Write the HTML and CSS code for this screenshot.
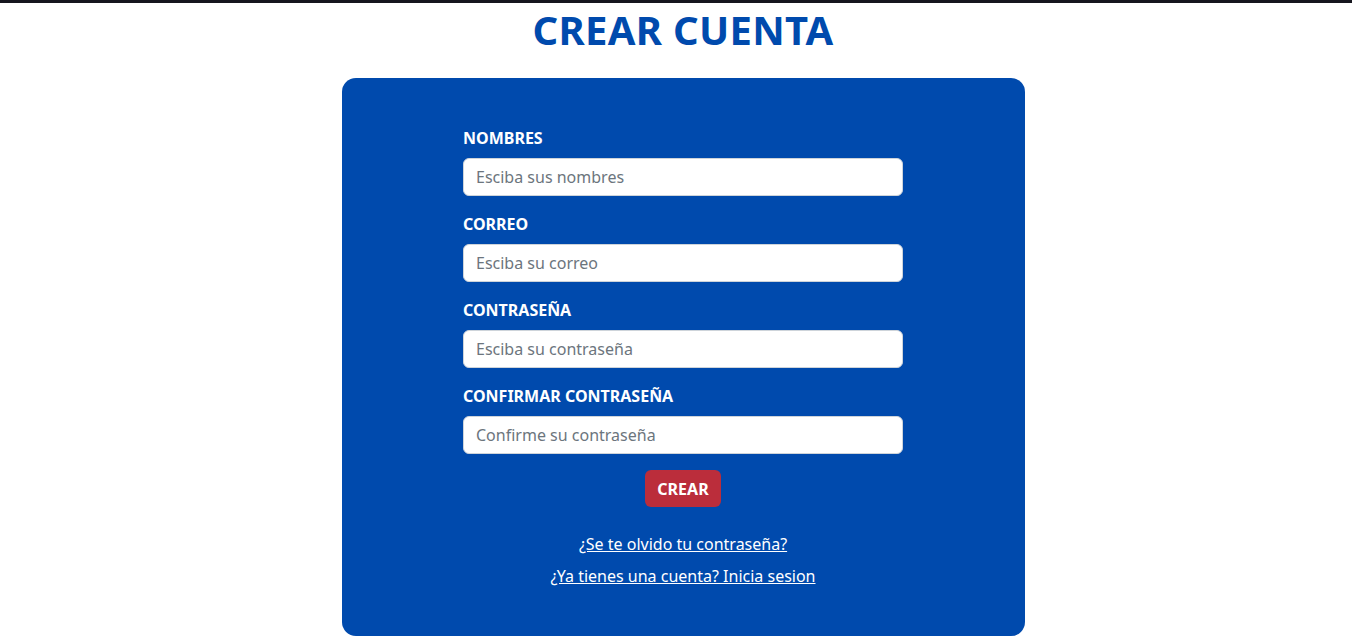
FILE: index.html
```html
<!DOCTYPE html>
<html lang="es">
<head>
<meta charset="utf-8">
<title>Crear cuenta</title>
<link rel="stylesheet" href="styles.css">
</head>
<body>
<div class="topbar"></div>
<div class="page">
<h1 class="title">CREAR CUENTA</h1>
<main class="card">
  <form class="form">
    <div class="group">
      <label class="label" for="n">NOMBRES</label>
      <input class="input" id="n" type="text" placeholder="Esciba sus nombres">
    </div>
    <div class="group">
      <label class="label" for="c">CORREO</label>
      <input class="input" id="c" type="text" placeholder="Esciba su correo">
    </div>
    <div class="group">
      <label class="label" for="p">CONTRASEÑA</label>
      <input class="input" id="p" type="text" placeholder="Esciba su contraseña">
    </div>
    <div class="group">
      <label class="label" for="p2">CONFIRMAR CONTRASEÑA</label>
      <input class="input" id="p2" type="text" placeholder="Confirme su contraseña">
    </div>
    <div class="actions">
      <button class="btn" type="button">CREAR</button>
    </div>
    <div class="links">
      <a class="link" href="#">¿Se te olvido tu contraseña?</a>
      <a class="link" href="#">¿Ya tienes una cuenta? Inicia sesion</a>
    </div>
  </form>
</main>
</div>
</body>
</html>
```
FILE: styles.css
```css
* { box-sizing: border-box; }
html, body { margin: 0; padding: 0; background: #fff; }
body {
  font-family: "Noto Sans", "Open Sans", sans-serif;
  font-size: 16px;
  line-height: 1.5;
  color: #212529;
}
.topbar { height: 3px; background: #16161e; }
.page { padding-left: 14px; }
.title {
  margin: 3px 0 24px;
  text-align: center;
  font-size: 40px;
  line-height: 48px;
  font-weight: 700;
  letter-spacing: 0.3px;
  color: #004aad;
}
.card {
  width: 683px;
  margin: 0 auto;
  background: #004aad;
  border-radius: 14px;
  padding: 48px 0 48px;
}
.form { width: 440px; margin: 0 auto; display: flex; flex-direction: column; }
.group { display: flex; flex-direction: column; margin-bottom: 16px; }
.label {
  color: #fff;
  font-weight: 700;
  font-size: 16px;
  line-height: 24px;
  margin-bottom: 8px;
}
.input {
  height: 38px;
  width: 100%;
  padding: 6px 12px;
  border: 1px solid #ced4da;
  border-radius: 6px;
  font: inherit;
  font-size: 16px;
  color: #212529;
  background: #fff;
}
.input::placeholder { color: #6c757d; }
.actions { display: flex; justify-content: center; }
.btn {
  height: 37px;
  padding: 0 12px;
  border: 0;
  border-radius: 6px;
  background: #bb2d3b;
  color: #fff;
  font: inherit;
  font-weight: 700;
  font-size: 16px;
}
.links { display: flex; flex-direction: column; align-items: center; gap: 8px; margin-top: 25px; }
.link { color: #fff; text-decoration: underline; line-height: 24px; }
```
